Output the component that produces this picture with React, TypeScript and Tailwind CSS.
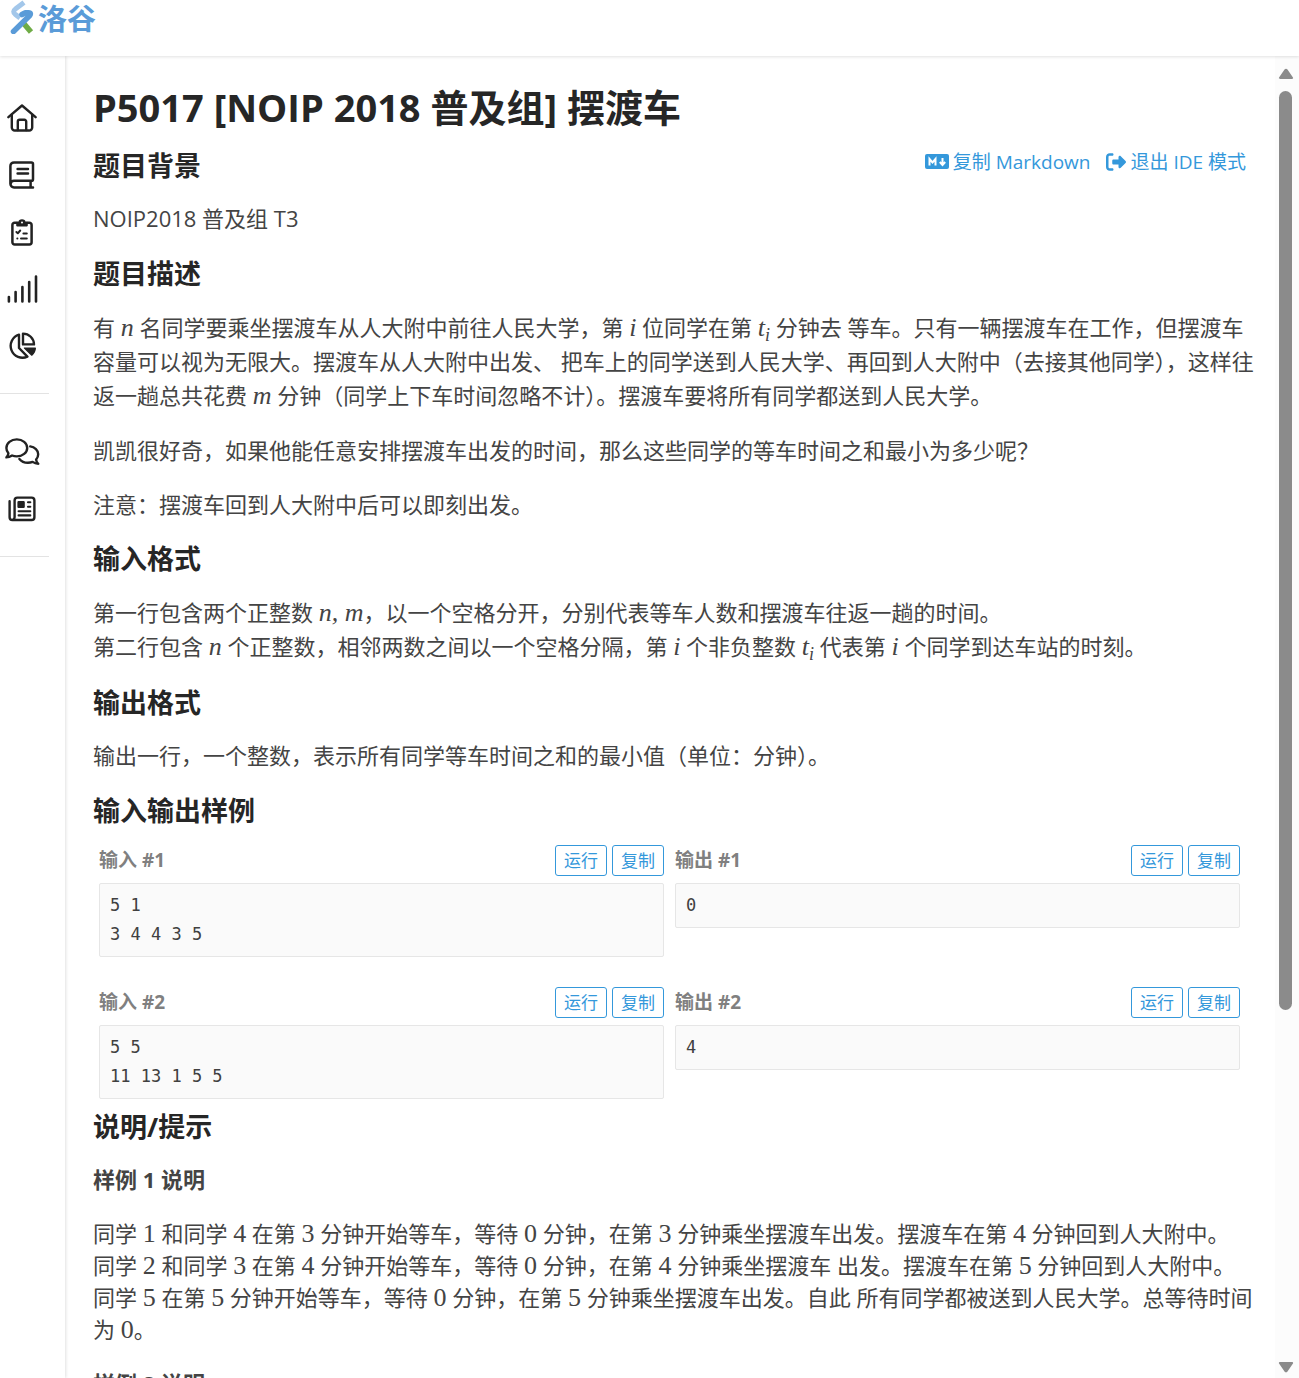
import React from 'react';
import { FaRightFromBracket } from 'react-icons/fa6';

const navMain = [
  {
    label: '首页',
    icon: (
      <svg viewBox="0 0 30 28" className="w-[30px] h-7" fill="none" stroke="currentColor" strokeWidth="2.4" strokeLinecap="round" strokeLinejoin="round">
        <path d="M1.4 13.2 15 1.5l13.6 11.7" />
        <path d="M4.8 10.8v12.7a3 3 0 0 0 3 3h14.4a3 3 0 0 0 3-3V10.8" />
        <path d="M10.8 26v-8.4a1.8 1.8 0 0 1 1.8-1.8h4.8a1.8 1.8 0 0 1 1.8 1.8V26" />
      </svg>
    ),
  },
  {
    label: '题库',
    icon: (
      <svg viewBox="0 0 26 28" className="w-[26px] h-7" fill="none" stroke="currentColor" strokeWidth="2.5" strokeLinecap="round" strokeLinejoin="round">
        <path d="M24 26.4H5a3.6 3.6 0 0 1-3.6-3.6V5A3.6 3.6 0 0 1 5 1.4h17.4A1.6 1.6 0 0 1 24 3v15.2a1.6 1.6 0 0 1-1.6 1.6H5a3.4 3.4 0 0 0-3.4 3M21.6 20v6M8.6 8H19M8.6 12.4H19" />
      </svg>
    ),
  },
  {
    label: '题单',
    icon: (
      <svg viewBox="0 0 22 28" className="w-[22px] h-7" fill="none" stroke="currentColor" strokeWidth="2.5" strokeLinecap="round" strokeLinejoin="round">
        <path d="M6 4.8H3.6a2.2 2.2 0 0 0-2.2 2.2v17.2a2.2 2.2 0 0 0 2.2 2.2h14.8a2.2 2.2 0 0 0 2.2-2.2V7a2.2 2.2 0 0 0-2.2-2.2H16" />
        <path d="M6 4.6h1.8a3.3 3.3 0 0 1 6.4 0H16v3H6z" fill="currentColor" strokeWidth="1.6" />
        <circle cx="11" cy="4.4" r="1" fill="white" stroke="none" />
        <path d="m5.4 14 1.4 1.3 2.4-2.8M12.4 15.4h3.4M10 20.6h5.8M6.3 20.6h.1" strokeWidth="2" />
      </svg>
    ),
  },
  {
    label: '比赛',
    icon: (
      <svg viewBox="0 0 32 28" className="w-8 h-7" fill="none" stroke="currentColor" strokeWidth="2.6" strokeLinecap="round">
        <path d="M2.9 22v4.4M9.600 17v9.400M16.400 12v14.400M23.200 7v19.400M30 1.600v24.800" />
      </svg>
    ),
  },
  {
    label: '记录',
    icon: (
      <svg viewBox="0 0 30 28" className="w-[30px] h-7" fill="none" stroke="currentColor" strokeWidth="2.4" strokeLinejoin="round">
        <path d="M12 2.600A11.800 11.800 0 1 0 20.400 24.600L12 16z" />
        <path d="M16 1.6v10.8h11A11 11 0 0 0 16 1.6z" />
        <path d="M17.4 16h11a10 10 0 0 1-3.6 7.2z" fill="currentColor" strokeWidth="1.2" />
      </svg>
    ),
  },
];

const navMore = [
  {
    label: '讨论',
    icon: (
      <svg viewBox="0 0 35 28" className="w-[35px] h-7" fill="none" stroke="currentColor" strokeWidth="2.4" strokeLinecap="round" strokeLinejoin="round">
        <path d="M11.8 1.4c5.8 0 10.4 3.8 10.4 8.5s-4.6 8.5-10.4 8.5c-1.7 0-3.3-.3-4.7-.9-1.5 1-3.5 1.9-5.7 1.9 1-1 1.8-2.5 2-4.1C2.1 13.8 1.4 12 1.4 9.9c0-4.7 4.6-8.5 10.4-8.5z" />
        <path d="M25.2 8.4c4.6.7 8 4 8 7.9 0 2-.8 3.8-2.1 5.3.2 1.7 1 3.2 2.2 4.2-2.2 0-4.2-.8-5.7-1.9-1.4.6-3 .9-4.7.9-3.6 0-6.7-1.5-8.5-3.8" />
      </svg>
    ),
  },
  {
    label: '新闻',
    icon: (
      <svg viewBox="0 0 28 26" className="w-7 h-[26px]" fill="none" stroke="currentColor" strokeWidth="2.4" strokeLinecap="round" strokeLinejoin="round">
        <path d="M6.6 20.8V4.4a2.8 2.8 0 0 1 2.8-2.8h14.2a2.8 2.8 0 0 1 2.8 2.8v16.8a2.8 2.8 0 0 1-2.8 2.8H4.4a2.8 2.8 0 0 1-2.8-2.8V5.2M6.6 20.8a3 3 0 0 1-3 3.2" />
        <path d="M10.6 6.3h5v4.4h-5z" fill="currentColor" />
        <path d="M20 6.3h2.3M20 10.7h2.3M10.6 15.2h11.7M10.6 19.4h11.7" strokeWidth="2.1" />
      </svg>
    ),
  },
];

const samples = [
  { id: 1, input: '5 1\n3 4 4 3 5', output: '0' },
  { id: 2, input: '5 5\n11 13 1 5 5', output: '4' },
];

function Logo() {
  return (
    <a href="#home" className="flex items-start gap-1 pl-[10px] text-[#5a9bd8]">
      <svg viewBox="0 0 24 34" className="w-6 h-[34px]" fill="none" strokeWidth="5" strokeLinejoin="round">
        <path d="M14 2.500 6 8.500c-3 2.300-3 4-.5 6l4.500 3.500" stroke="#a3c7ea" />
        <path d="m12.500 22 8.500 10" stroke="#6fac46" strokeWidth="5.500" />
        <path d="M12 14.500 15 12.800h3.500c2.200 0 2.400 1.200 1 3L3.500 31.500" stroke="#5a9bd8" strokeWidth="5.500" strokeLinecap="round" />
      </svg>
      <span className="text-[29px] leading-[38px] font-bold">洛谷</span>
    </a>
  );
}

function MarkdownIcon() {
  return (
    <svg viewBox="0 0 24 16" className="h-4 w-6">
      <rect width="24" height="15" rx="2" fill="currentColor" />
      <path d="M4.500 11.500V5l3 3.500 3-3.500v6.500M17.500 4v6M14.800 8l2.700 3 2.700-3" fill="none" stroke="white" strokeWidth="2" />
    </svg>
  );
}

function NavLink({ label, icon }: { label: string; icon: React.ReactNode }) {
  return (
    <a href="#nav" aria-label={label} className="flex h-[57px] w-11 items-center justify-center text-[#222]">
      {icon}
    </a>
  );
}

function Heading({ children }: { children: React.ReactNode }) {
  return <h2 className="text-[27px] leading-10 font-bold text-[#262626]">{children}</h2>;
}

// inline math, upright digits by default
function M({ children, it = false }: { children: React.ReactNode; it?: boolean }) {
  return (
    <span className={`font-['Liberation_Serif',serif] text-[26px] leading-none ${it ? 'italic' : ''}`}>
      {children}
    </span>
  );
}

function Ti() {
  return <M it>t<sub className="text-[18px]">i</sub></M>;
}

function Sample({ title, code }: { title: string; code: string }) {
  return (
    <div className="min-w-0 flex-1">
      <div className="flex justify-between">
        <h3 className="text-[19px] leading-[30px] font-bold text-[#808080]">{title}</h3>
        <div className="flex gap-[5px]">
          {['运行', '复制'].map((text) => (
            <button key={text} className="h-[31px] rounded-[3px] border border-[#3498db] px-2 text-[17px] leading-7 text-[#3498db]">
              {text}
            </button>
          ))}
        </div>
      </div>
      <pre className="mt-[7px] rounded-xs border border-[#e6e6e6] bg-[#fafafa] px-[10px] py-[7px] font-['DejaVu_Sans_Mono',monospace] text-[17px] leading-[29px] text-[#404040]">
        {code}
      </pre>
    </div>
  );
}

export default function App() {
  return (
    <div lang="zh-CN" className="flex h-screen flex-col overflow-hidden bg-white font-['Open_Sans','Noto_Sans_CJK_SC',sans-serif] text-[#444]">
      <header className="z-10 h-14 shrink-0 bg-white shadow-[0_1px_3px_rgba(0,0,0,0.12)]">
        <Logo />
      </header>
      <div className="flex min-h-0 flex-1">
        <nav className="w-[65px] shrink-0 pt-[33px] shadow-[1px_0_3px_rgba(0,0,0,0.12)]">
          <div className="mr-4 border-b border-[#e3e3e3] pb-[19px]">
            {navMain.map((item) => <NavLink key={item.label} {...item} />)}
          </div>
          <div className="mr-4 border-b border-[#e3e3e3] pt-[29px] pb-[19px]">
            {navMore.map((item) => <NavLink key={item.label} {...item} />)}
          </div>
        </nav>

        <main className="min-w-0 flex-1 overflow-hidden pt-[23px] pr-[29px] pl-7 text-[22px] leading-8">
          <h1 className="text-[38px] leading-[57px] font-bold text-[#262626]">P5017 [NOIP 2018 普及组] 摆渡车</h1>

          <div className="mt-[10px] flex items-start justify-between">
            <Heading>题目背景</Heading>
            <div className="flex gap-4 text-[19px] text-[#3498db]">
              <a href="#markdown" className="flex items-center gap-1">
                <MarkdownIcon />
                复制 Markdown
              </a>
              <a href="#exit" className="flex items-center gap-1">
                <FaRightFromBracket className="size-5" />
                退出 IDE 模式
              </a>
            </div>
          </div>
          <p className="mt-4 mb-5">NOIP2018 普及组 T3</p>

          <Heading>题目描述</Heading>
          <div className="mt-4 mb-[19px] -mr-6 space-y-[22px]">
            <p className="leading-[34px]">
              有 <M it>n</M> 名同学要乘坐摆渡车从人大附中前往人民大学，第 <M it>i</M> 位同学在第 <Ti /> 分钟去 等车。只有一辆摆渡车在工作，但摆渡车<br />
              容量可以视为无限大。摆渡车从人大附中出发、 把车上的同学送到人民大学、再回到人大附中（去接其他同学），这样往<br />
              返一趟总共花费 <M it>m</M> 分钟（同学上下车时间忽略不计）。摆渡车要将所有同学都送到人民大学。
            </p>
            <p>凯凯很好奇，如果他能任意安排摆渡车出发的时间，那么这些同学的等车时间之和最小为多少呢？</p>
            <p>注意：摆渡车回到人大附中后可以即刻出发。</p>
          </div>

          <Heading>输入格式</Heading>
          <p className="mt-4 mb-5 leading-[34px]">
            第一行包含两个正整数 <M it>n, m</M>，以一个空格分开，分别代表等车人数和摆渡车往返一趟的时间。<br />
            第二行包含 <M it>n</M> 个正整数，相邻两数之间以一个空格分隔，第 <M it>i</M> 个非负整数 <Ti /> 代表第 <M it>i</M> 个同学到达车站的时刻。
          </p>

          <Heading>输出格式</Heading>
          <p className="mt-4 mb-5">输出一行，一个整数，表示所有同学等车时间之和的最小值（单位：分钟）。</p>

          <Heading>输入输出样例</Heading>
          <div className="mx-[6px] mt-[14px] mb-2 space-y-[30px]">
            {samples.map((s) => (
              <div key={s.id} className="flex items-start gap-[11px]">
                <Sample title={`输入 #${s.id}`} code={s.input} />
                <Sample title={`输出 #${s.id}`} code={s.output} />
              </div>
            ))}
          </div>

          <Heading>说明/提示</Heading>
          <div className="mt-4 -mr-6 space-y-[22px]">
            <h4 className="font-bold">样例 1 说明</h4>
            <p>
              同学 <M>1</M> 和同学 <M>4</M> 在第 <M>3</M> 分钟开始等车，等待 <M>0</M> 分钟，在第 <M>3</M> 分钟乘坐摆渡车出发。摆渡车在第 <M>4</M> 分钟回到人大附中。<br />
              同学 <M>2</M> 和同学 <M>3</M> 在第 <M>4</M> 分钟开始等车，等待 <M>0</M> 分钟，在第 <M>4</M> 分钟乘坐摆渡车 出发。摆渡车在第 <M>5</M> 分钟回到人大附中。<br />
              同学 <M>5</M> 在第 <M>5</M> 分钟开始等车，等待 <M>0</M> 分钟，在第 <M>5</M> 分钟乘坐摆渡车出发。自此 所有同学都被送到人民大学。总等待时间<br />
              为 <M>0</M>。
            </p>
            <h4 className="font-bold">样例 2 说明</h4>
          </div>
        </main>

        <div aria-hidden="true" className="flex w-6 shrink-0 flex-col items-center bg-[#fcfcfc] pt-3 pr-[3px] pb-[5px] text-[#8b8b8b]">
          <svg viewBox="0 0 16 12" className="h-3 w-4 shrink-0" fill="currentColor">
            <path d="M6.5 1.6a2 2 0 0 1 3 0l5.300 7.600c.7 1 .2 1.800-.9 1.800H2.100c-1.100 0-1.600-.8-.9-1.800z" />
          </svg>
          <div className="min-h-0 flex-1 py-[11px]">
            <div className="h-[73%] w-[13px] rounded-full bg-[#8b8b8b]" />
          </div>
          <svg viewBox="0 0 16 12" className="h-3 w-4 shrink-0" fill="currentColor">
            <path d="M6.5 10.4a2 2 0 0 0 3 0l5.300-7.600c.7-1 .2-1.800-.9-1.800H2.100C1 1 .5 1.800 1.200 2.800z" />
          </svg>
        </div>
      </div>
    </div>
  );
}
